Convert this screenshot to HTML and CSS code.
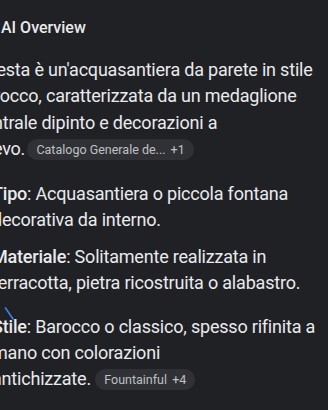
FILE: index.html
```html
<!DOCTYPE html>
<html>
<head>
<meta charset="utf-8">
<link rel="stylesheet" href="styles.css">
</head>
<body>
<div class="overview">
  <div class="header">
    <span class="title">AI Overview</span>
  </div>
  <p class="summary">Questa è un'acquasantiera da parete in stile<br>barocco, caratterizzata da un medaglione<br>centrale dipinto e decorazioni a<br>rilievo. <span class="chip chip-first">Catalogo Generale de... <span class="more">+1</span></span></p>
  <ul class="facts">
    <li class="fact"><b>Tipo</b>: Acquasantiera o piccola fontana<br>decorativa da interno.</li>
    <li class="fact"><b>Materiale</b>: Solitamente realizzata in<br>terracotta, pietra ricostruita o alabastro.</li>
    <li class="fact fact-last"><b>Stile</b>: Barocco o classico, spesso rifinita a<br>mano con colorazioni<br>antichizzate. <span class="chip">Fountainful <span class="more">+4</span></span></li>
  </ul>
  <svg class="marker" width="14" height="16" viewBox="0 0 14 16"><line x1="1.5" y1="1" x2="9" y2="12" stroke="#3f7fe6" stroke-width="1.6" stroke-linecap="round"/></svg>
</div>
</body>
</html>
```
FILE: styles.css
```css
html, body {
  margin: 0;
  padding: 0;
  background: #202124;
  overflow: hidden;
}
body {
  width: 328px;
  height: 410px;
  font-family: Roboto, "Liberation Sans", sans-serif;
  color: #e8eaed;
}
.overview {
  position: relative;
  height: 410px;
}
.header {
  padding: 18px 0 0 1px;
  height: 26px;
}
.title {
  font-size: 16px;
  font-weight: 500;
  line-height: 20px;
  display: block;
}
.summary {
  margin: 13px 0 0 -25.5px;
  font-size: 18px;
  line-height: 26.3px;
  letter-spacing: -0.2px;
  white-space: nowrap;
}
.chip {
  display: inline-block;
  background: #303134;
  color: #bdc1c6;
  font-size: 12.5px;
  letter-spacing: 0;
  line-height: 21px;
  height: 21px;
  padding: 0 9px;
  border-radius: 11px;
  vertical-align: 1px;
}
.chip-first {
  margin-left: -2px;
}
.more {
  margin-left: 2px;
}
.facts {
  list-style: none;
  margin: 19px 0 0 -8px;
  padding: 0;
  font-size: 18px;
  line-height: 26px;
  letter-spacing: -0.2px;
  white-space: nowrap;
}
.fact {
  margin-bottom: 11px;
}
.fact b {
  font-weight: 500;
}
.fact-last {
  margin-top: 18px;
}
.marker {
  position: absolute;
  left: 4px;
  top: 307px;
}
```
